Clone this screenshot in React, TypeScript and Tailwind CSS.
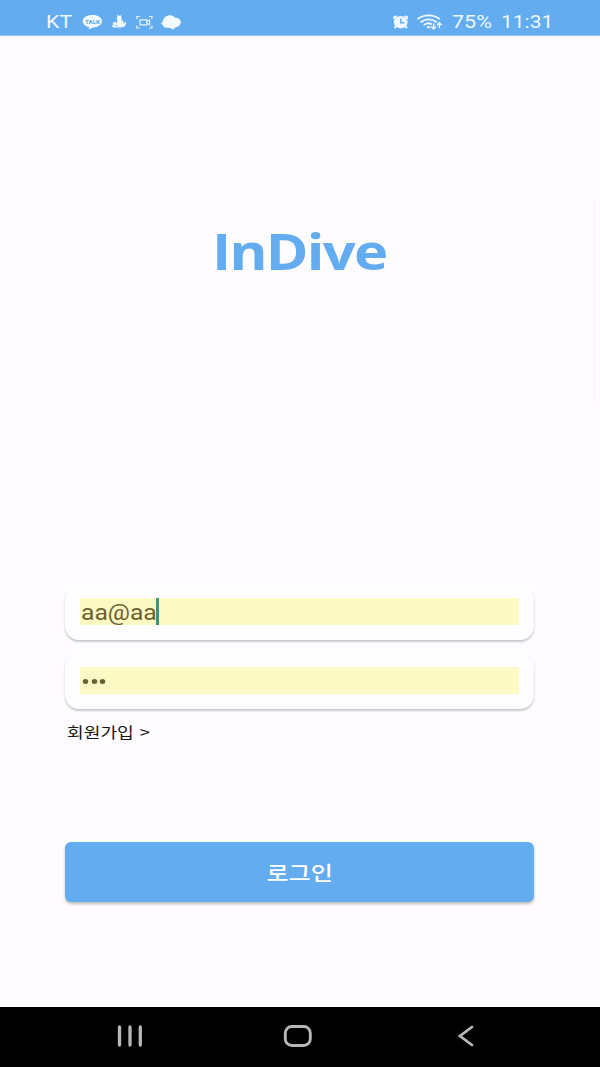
import type { ReactNode } from "react";

function Wide({ className, children }: { className: string; children: ReactNode }) {
  return <span className={`block w-max origin-left whitespace-nowrap ${className}`}>{children}</span>;
}

function StatusBar() {
  return (
    <header className="flex h-9 shrink-0 items-start border-b border-[#8fc0ef] bg-[#63acef] pl-[46px] pt-[11px] font-['Roboto','Noto_Sans',sans-serif] text-[17.5px] leading-[22px] text-[#eff7ff]">
      <div className="w-9">
        <Wide className="scale-x-[1.22]">KT</Wide>
      </div>
      <svg className="h-[22px] w-[101px]" viewBox="82 11 101 22" fill="#f2f9ff">
        <path d="M92.500 15c5.500 0 9.500 2.700 9.500 6.200 0 3.400-3.700 6.100-8.800 6.200l-4.700 2.100.7-2.500c-4-.8-6.500-3-6.500-5.800 0-3.500 4.300-6.200 9.800-6.200Z" />
        <text x="85" y="23.700" textLength="15" lengthAdjust="spacingAndGlyphs" fontFamily="Roboto, sans-serif" fontWeight="900" fontSize="6.200" fill="#63acef">TALK</text>
        <ellipse cx="119.200" cy="18" rx="2.500" ry="2.400" />
        <path d="M117.200 15l1.500 1.200M121.400 15l-1.200 1.200" stroke="#f2f9ff" strokeWidth="1" />
        <path d="M117.500 19.500h3.700c1.900 1.100 2.900 2.600 2.600 4.200.8 0 1.200-.8.900-1.700l1.200-.1c.6 2.700-.7 4.700-2.700 5.100-3 .7-7.500.8-10.300.2-1.200-.9-.7-2.200.6-2.600-1-1-.6-2.500.8-2.700 1.200-.2 2.200.5 2.300 1.400.6-.8.900-2 .9-3.800Z" />
        <path d="M114.500 25.300c1.700-.2 2.700.3 3.200 1.400" fill="none" stroke="#63acef" strokeWidth=".7" />
        <g fill="none" stroke="#e5f2ff" strokeWidth="1.200">
          <path d="M136.800 19v-2.500h3M149 16.500h3V19M136.800 25.500V28h3M149 28h3v-2.500M140 19.800h6.800v5H140zM146.800 21.500l2.800-1.500v4.700l-2.800-1.500" />
        </g>
        <path d="M170.500 15.200c1.900 0 3 .8 3.700 2.100 3.700.1 6.600 2.200 6.600 4.900 0 2.600-2.300 4.600-5.300 5.100-.6 1.300-1.600 2-3 2.300-.8-.6-1.500-1.500-3.200-1.900-3.200.4-6.300-.6-6.700-2.800l-1.500-1.500 1.500-1.300c.4-4.200 3.700-6.900 7.900-6.900Z" />
      </svg>
      <div className="w-[210px]" />
      <svg className="h-[22px] w-[50px]" viewBox="393 11 50 22" fill="#eff7ff">
        <ellipse cx="400.700" cy="22.200" rx="6.900" ry="6.200" />
        <path d="M393.200 18.800c-.5-2.800 2-4.200 4.200-2.800l-3.200 3.400zM408.200 18.800c.5-2.800-2-4.200-4.200-2.800l3.200 3.400zM395 25.500l1.800 1.700-1.700 1.500-1.300-.9zM406.400 25.500l-1.800 1.700 1.700 1.500 1.300-.9z" />
        <path d="M400.800 18.500v4.300h3.400" fill="none" stroke="#63acef" strokeWidth="1.400" />
        <g fill="none" stroke="#eff7ff" strokeWidth="1.800" strokeLinecap="round">
          <path d="M418 18.800c6-4.500 15.200-4.500 21.200 0M421.200 21.900c4.500-3.300 10.500-3.300 15 0M424.200 24.900c2.500-1.900 5-2 7-.8" />
          <path d="M427.500 27.400c.8-.6 1.600-.6 2.300-.1" />
          <path d="M433.600 24v4.700M431.600 26.900l2 2 2-2M439.300 27.700V23M437.300 24.700l2-2 2 2" strokeWidth="1.400" />
        </g>
      </svg>
      <div className="ml-[9px] w-[49px]">
        <Wide className="scale-x-[1.23]">75%</Wide>
      </div>
      <Wide className="scale-x-[1.2]">11:31</Wide>
    </header>
  );
}

function Field({ children }: { children: ReactNode }) {
  return (
    <div className="h-[55px] rounded-[14px] bg-[#fefdff] px-[15px] pt-[13px] shadow-[0_2px_2px_rgba(0,0,0,0.18),0_1px_3px_rgba(0,0,0,0.06)]">
      <div className="flex h-[27px] items-center bg-[#fdf9c5] pl-px font-['Roboto','Noto_Sans',sans-serif] text-[#6b6030]">
        {children}
      </div>
    </div>
  );
}

function Dot() {
  return <i className="size-[5px] scale-x-[1.1] rounded-full bg-[#6b6030]" />;
}

function NavBar() {
  return (
    <nav className="flex h-[60px] shrink-0 items-center bg-black pb-[2px] pl-[117px] text-[#b9b5b8]">
      <svg className="h-6 w-[26px]" viewBox="0 0 26 24" fill="none" stroke="currentColor" strokeWidth="3.300" strokeLinecap="round">
        <path d="M2.500 3v18M13 3v18M23.300 3v18" />
      </svg>
      <svg className="ml-[140px] h-6 w-[30px]" viewBox="0 0 30 24" fill="none" stroke="currentColor" strokeWidth="2.900">
        <rect x="2.300" y="2.500" width="25" height="19" rx="6.500" />
      </svg>
      <svg className="ml-[144px] h-6 w-[18px]" viewBox="0 0 18 24" fill="none" stroke="currentColor" strokeWidth="2.800" strokeLinecap="round">
        <path d="M15 3 3 12l12 9" />
      </svg>
    </nav>
  );
}

export default function App() {
  return (
    <div className="flex h-[1067px] w-[600px] flex-col overflow-hidden bg-[#fefcff]">
      <StatusBar />
      <main className="flex min-h-0 flex-1">
        <div className="w-[65px] shrink-0" />
        <div className="flex w-[469px] flex-col">
          <h1 className="mt-[181px] flex h-[68px] justify-start pl-[147px] font-['Open_Sans','Noto_Sans',sans-serif] text-[50px] font-bold leading-[68px] tracking-[-1.500px] text-[#63acef]">
            <Wide className="scale-x-[1.158]">InDive</Wide>
          </h1>
          <form className="mt-[300px] flex flex-col gap-[14px]" onSubmit={(e) => e.preventDefault()}>
            <Field>
              <div className="w-[75px] shrink-0 pt-[3px]">
                <Wide className="scale-x-[1.12] text-[22px] leading-[24px]">aa@aa</Wide>
              </div>
              <span className="h-[27px] w-[3px] shrink-0 bg-[#3f9180]" />
            </Field>
            <Field>
              <div className="flex gap-[3.500px] pl-[2px] pt-[1px]">
                <Dot />
                <Dot />
                <Dot />
              </div>
            </Field>
          </form>
          <a className="mt-[13px] block h-5 pl-[2px] font-['Noto_Sans_CJK_KR',sans-serif] text-[15px] leading-5 text-[#171518]">
            <Wide className="scale-x-[1.21] [word-spacing:1.500px]">회원가입 &gt;</Wide>
          </a>
          <button className="mt-[100px] flex h-[60px] items-center justify-center rounded-[6px] bg-[#63acef] pt-[2px] font-['Noto_Sans_CJK_KR',sans-serif] text-[20px] font-medium text-white shadow-[0_2px_3px_rgba(0,0,0,0.25)]">
            <span className="scale-x-[1.2]">로그인</span>
          </button>
        </div>
        <div className="ml-[60px] mt-[162px] h-[205px] w-px bg-[#f5f3f6]" />
      </main>
      <NavBar />
    </div>
  );
}
